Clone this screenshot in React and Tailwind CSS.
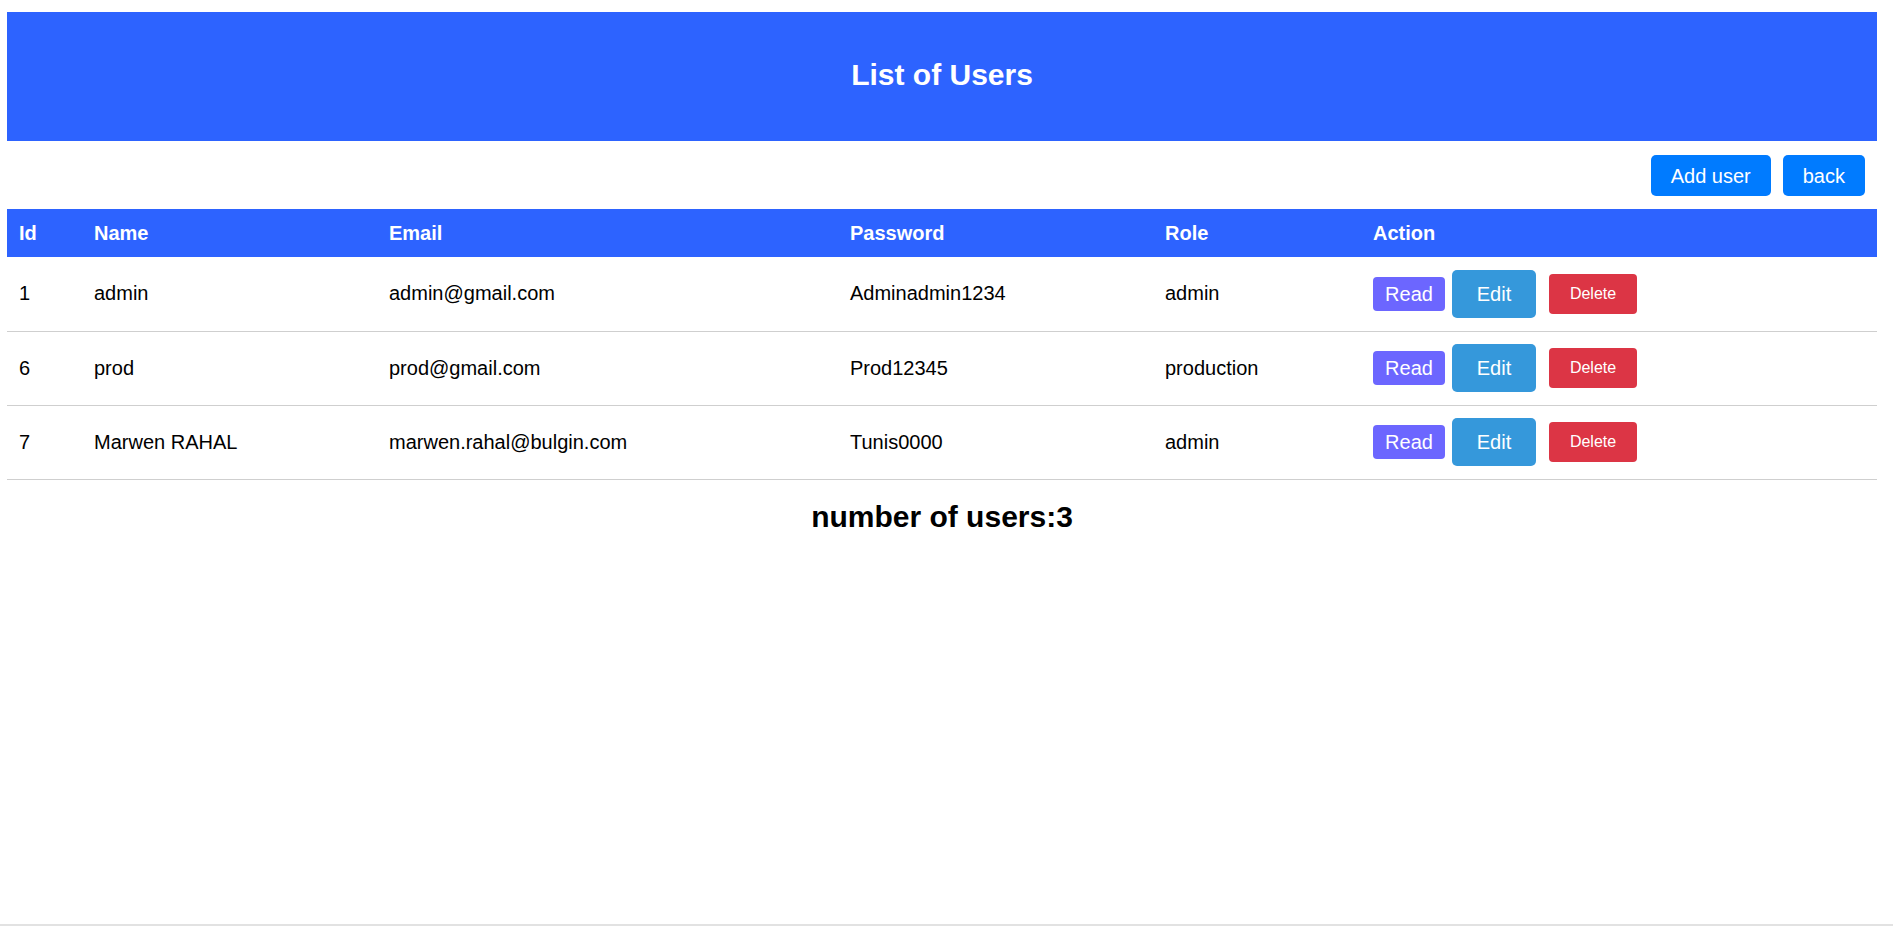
import React from "react";

const users = [
  { id: 1, name: "admin", email: "admin@gmail.com", password: "Adminadmin1234", role: "admin" },
  { id: 6, name: "prod", email: "prod@gmail.com", password: "Prod12345", role: "production" },
  { id: 7, name: "Marwen RAHAL", email: "marwen.rahal@bulgin.com", password: "Tunis0000", role: "admin" },
];

export default function App() {
  return (
    <div className="flex h-[926px] flex-col bg-white text-black font-['Liberation_Sans',Arial,sans-serif]">
      <div className="ml-[7px] mr-[16px] mt-[12px] flex flex-1 flex-col">
        <header className="flex h-[129px] items-center justify-center bg-[#2d63ff] pb-[5px]">
          <h1 className="text-[30px] font-bold text-white">List of Users</h1>
        </header>

        <div className="mt-[14px] flex justify-end gap-[12px] pr-[12px]">
          <button className="h-[41px] rounded-[5px] bg-[#007bff] px-[20px] text-[20px] text-white">Add user</button>
          <button className="h-[41px] rounded-[5px] bg-[#007bff] px-[20px] text-[20px] text-white">back</button>
        </div>

        <table className="mt-[13px] w-full table-fixed border-collapse text-left text-[20px]">
          <colgroup>
            <col className="w-[75px]" />
            <col className="w-[295px]" />
            <col className="w-[461px]" />
            <col className="w-[315px]" />
            <col className="w-[208px]" />
            <col />
          </colgroup>
          <thead>
            <tr className="h-[48px] bg-[#2d63ff] text-white">
              <th className="pl-[12px] font-bold">Id</th>
              <th className="pl-[12px] font-bold">Name</th>
              <th className="pl-[12px] font-bold">Email</th>
              <th className="pl-[12px] font-bold">Password</th>
              <th className="pl-[12px] font-bold">Role</th>
              <th className="pl-[12px] font-bold">Action</th>
            </tr>
          </thead>
          <tbody>
            {users.map((u) => (
              <tr key={u.id} className="h-[74px] border-b border-[#cfcfcf]">
                <td className="pl-[12px] pb-[1px]">{u.id}</td>
                <td className="pl-[12px] pb-[1px]">{u.name}</td>
                <td className="pl-[12px] pb-[1px]">{u.email}</td>
                <td className="pl-[12px] pb-[1px]">{u.password}</td>
                <td className="pl-[12px] pb-[1px]">{u.role}</td>
                <td className="pl-[12px]">
                  <div className="flex items-center">
                    <button className="h-[34px] w-[72px] rounded-[4px] bg-[#6c66ff] text-[20px] text-white">Read</button>
                    <button className="ml-[7px] h-[48px] w-[84px] rounded-[5px] bg-[#3598db] text-[20px] text-white">Edit</button>
                    <button className="ml-[13px] h-[40px] w-[88px] rounded-[4px] bg-[#dc3545] text-[16px] text-white">Delete</button>
                  </div>
                </td>
              </tr>
            ))}
          </tbody>
        </table>

        <h2 className="mt-[14px] text-center text-[30px] font-bold">number of users:3</h2>
      </div>
      <div className="h-[2px] bg-[#e2e2e2]" />
    </div>
  );
}
